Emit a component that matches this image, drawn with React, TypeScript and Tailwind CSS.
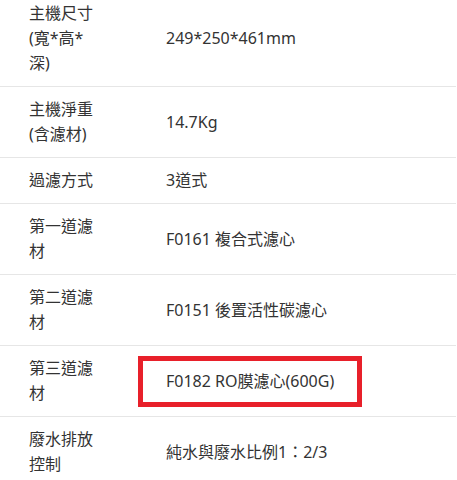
import React from "react";

const rows: { k: string; v: string; box?: boolean }[] = [
  { k: "主機尺寸(寬*高*深)", v: "249*250*461mm" },
  { k: "主機淨重(含濾材)", v: "14.7Kg" },
  { k: "過濾方式", v: "3道式" },
  { k: "第一道濾材", v: "F0161 複合式濾心" },
  { k: "第二道濾材", v: "F0151 後置活性碳濾心" },
  { k: "第三道濾材", v: "F0182 RO膜濾心(600G)", box: true },
  { k: "廢水排放控制", v: "純水與廢水比例1：2/3" },
];

export default function App() {
  return (
    <div
      className="w-[457px] h-[480px] overflow-hidden bg-white text-[#333] text-[16px] leading-[25px]"
      style={{ fontFamily: '"Noto Sans", "Noto Sans CJK TC", sans-serif' }}
    >
      <div className="-mt-[9px] w-[456px]">
        {rows.map((r, i) => (
          <div key={i} className="relative flex items-center border-b border-[#e6e6e6]">
            <div className="w-[138px] shrink-0 pl-[29px] pr-[43px] py-[10px] break-all">{r.k}</div>
            <div className="flex-1 pl-[28px] py-[10px]">{r.v}</div>
            {r.box && (
              <div className="absolute left-[138px] top-[10px] w-[224px] h-[51px] border-[5px] border-[#e8202a]" />
            )}
          </div>
        ))}
      </div>
    </div>
  );
}
